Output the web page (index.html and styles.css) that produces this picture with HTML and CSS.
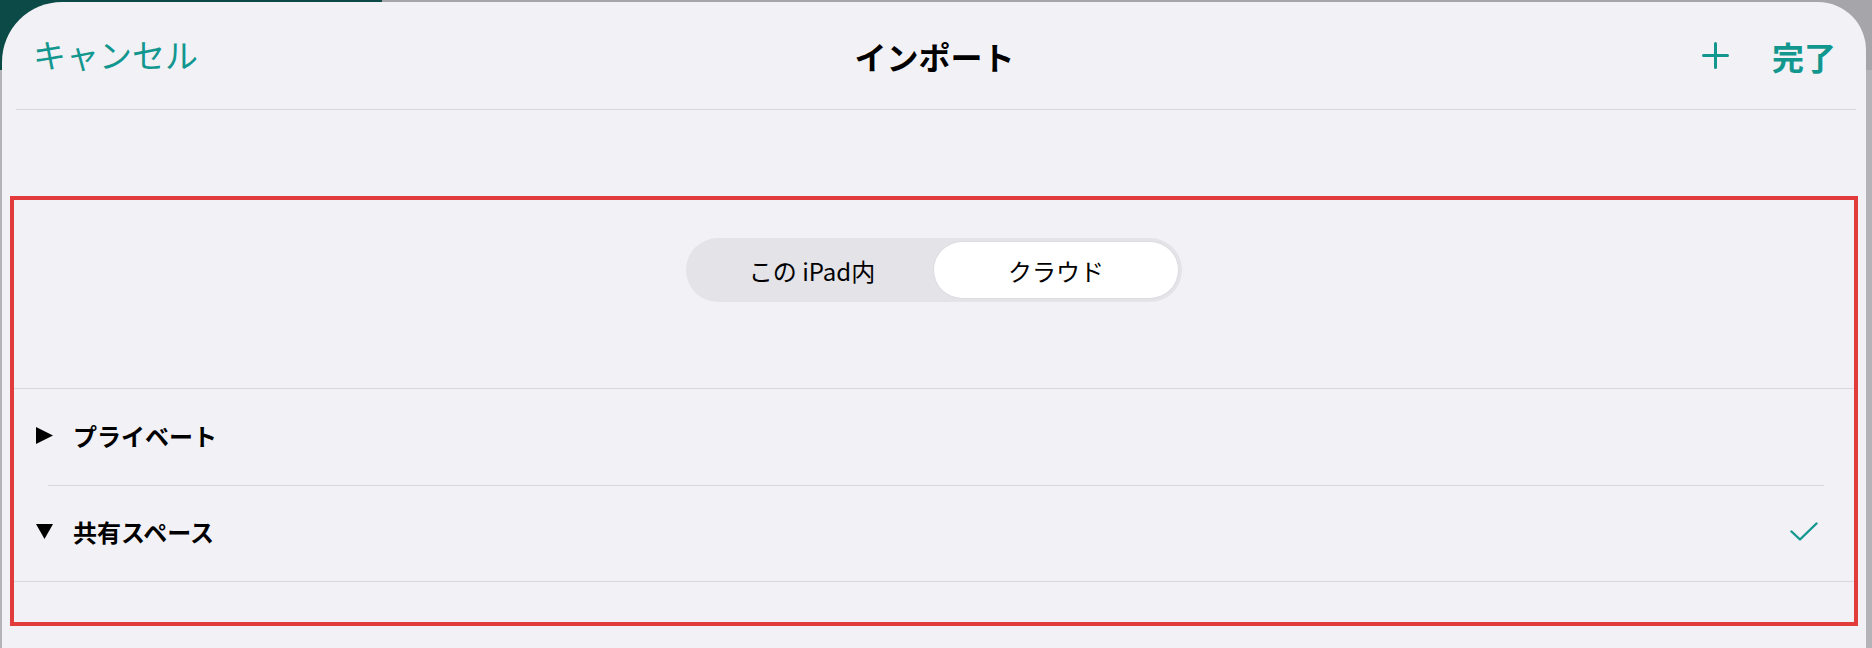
FILE: index.html
```html
<!DOCTYPE html>
<html lang="ja">
<head>
  <meta charset="UTF-8" />
  <title>インポート</title>
  <link rel="stylesheet" href="styles.css">
</head>
<body>

  <div class="sheet">
    <header class="navBar">
      <div class="navLeft">
        <span class="navButton">キャンセル</span>
      </div>
      <h1 class="navTitle">インポート</h1>
      <div class="navRight">
        <svg class="plusIcon" width="27" height="27" viewBox="0 0 27 27">
          <path d="M13.5 1.5 V25.5 M1.5 13.5 H25.5" stroke="currentColor" stroke-width="3" stroke-linecap="round" fill="none"/>
        </svg>
        <span class="navButton navDone">完了</span>
      </div>
    </header>

    <section class="importBox">
      <div class="segmentWrap">
        <div class="segmented">
          <div class="segment">この iPad内</div>
          <div class="segment selected">クラウド</div>
        </div>
      </div>

      <div class="list">
        <div class="row">
          <svg class="disclosure" width="17" height="17" viewBox="0 0 16 16">
            <polygon points="0,0 16,8 0,16" fill="#000"/>
          </svg>
          <span class="rowLabel">プライベート</span>
        </div>
        <div class="row">
          <svg class="disclosure" width="17" height="17" viewBox="0 0 16 16">
            <polygon points="0,1 16,1 8,15" fill="#000"/>
          </svg>
          <span class="rowLabel">共有スペース</span>
          <svg class="checkIcon" width="28" height="19" viewBox="0 0 28 19">
            <path d="M1.5 9.5 L10 17.5 L26.5 1.5" stroke="currentColor" stroke-width="2.4" stroke-linecap="round" stroke-linejoin="round" fill="none"/>
          </svg>
        </div>
      </div>
    </section>
  </div>

</body>
</html>
```

FILE: styles.css
```css
/* Reset */
* {
  margin: 0;
  padding: 0;
  box-sizing: border-box;
}

/* Backdrop behind the modal sheet */
body {
  background-color: #b4b4b8;
  background-image: linear-gradient(to right, #0b4a46 382px, #a6a6aa 382px);
  background-size: 100% 70px;
  background-repeat: no-repeat;
  font-family: "Noto Sans CJK JP", "Noto Sans", sans-serif;
  color: #000;
  height: 648px;
  overflow: hidden;
}

/* The sheet itself */
.sheet {
  margin: 2px 6px 0 2px;
  height: 646px;
  background: #f1f1f6;
  border-radius: 60px 48px 0 0;
}

/* Navigation bar */
.navBar {
  display: grid;
  grid-template-columns: 1fr auto 1fr;
  align-items: center;
  height: 108px;
  margin: 0 10px 0 14px;
  padding: 0 20px 0 17px;
  border-bottom: 1px solid #d8d8dd;
}

.navButton {
  font-size: 33px;
  color: #12978f;
  line-height: 1;
}

.navTitle {
  font-size: 32px;
  font-weight: 700;
  line-height: 1;
}

.navRight {
  display: flex;
  justify-content: flex-end;
  align-items: center;
  gap: 43px;
  color: #12978f;
}

.navDone {
  font-size: 32px;
  font-weight: 700;
}

/* Annotated area (red frame) */
.importBox {
  margin: 86px 8px 0 8px;
  height: 430px;
  border: 4px solid #e23b3b;
}

/* Segmented control */
.segmentWrap {
  display: flex;
  justify-content: center;
  padding: 38px 0 86px;
}

.segmented {
  display: flex;
  width: 496px;
  height: 64px;
  padding: 4px;
  background: #e3e3e8;
  border-radius: 32px;
}

.segment {
  flex: 1;
  display: flex;
  justify-content: center;
  align-items: center;
  font-size: 24px;
  border-radius: 28px;
  white-space: pre;
}

.segment.selected {
  background: #fff;
  box-shadow: 0 0 0 1px rgba(0,0,0,0.03);
}

/* List of spaces */
.list {
  border-top: 1px solid #d8d8dd;
  border-bottom: 1px solid #d8d8dd;
}

.row {
  display: flex;
  align-items: center;
  height: 96px;
  padding: 0 36px 4px 22px;
}

.row + .row {
  border-top: 1px solid #d8d8dd;
  margin-left: 34px;
  margin-right: 30px;
  padding-left: 0;
  padding-right: 6px;
}

.row + .row .disclosure {
  margin-left: -12px;
}

.disclosure {
  margin-right: 20px;
  flex-shrink: 0;
}

.rowLabel {
  font-size: 24px;
  font-weight: 700;
  flex: 1;
}

.checkIcon {
  color: #12978f;
}
```
